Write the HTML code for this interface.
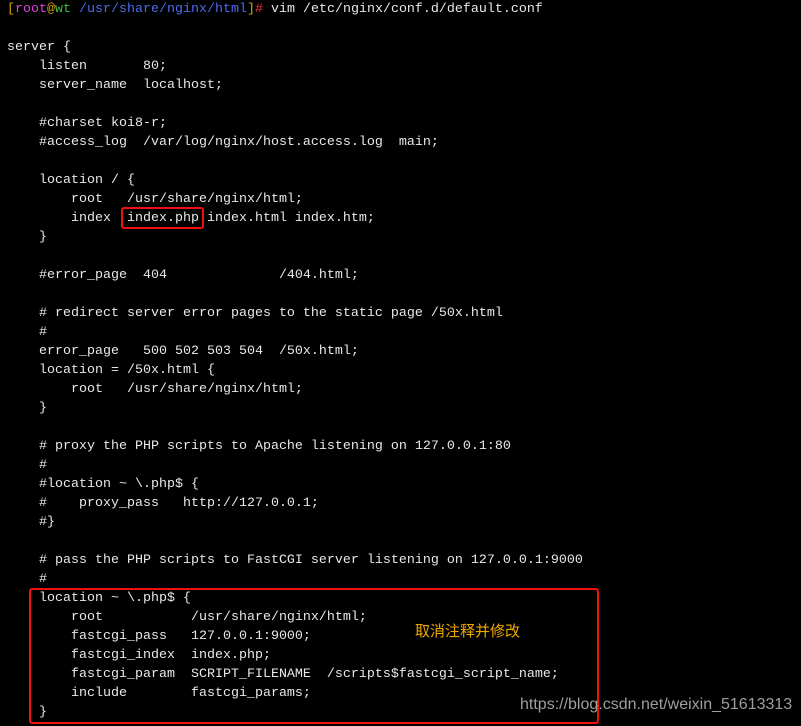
<!DOCTYPE html>
<html><head><meta charset="utf-8"><style>
html,body{margin:0;padding:0;background:#000;width:801px;height:726px;overflow:hidden}
pre{margin:0;position:absolute;left:7px;top:0px;font-family:"Liberation Mono","DejaVu Sans Mono",monospace;font-size:13.33px;line-height:19px;color:#e8e8e8}
.b{position:absolute;border:2px solid #f01010;border-radius:3px}
.y{color:#d0a000}.m{color:#e040e0}.g{color:#40c040}.bl{color:#4a6cf0}.r{color:#f03030}
.cn{position:absolute;left:415px;top:620px;color:#f0a800;font-family:"Noto Sans CJK SC",sans-serif;font-size:15px}
.wm{position:absolute;left:520px;top:696px;color:#bbb;font-family:"Liberation Sans",sans-serif;font-size:16px;opacity:.85}
</style></head><body>
<pre><span class="y">[</span><span class="m">root</span><span class="y">@</span><span class="g">wt</span> <span class="bl">/usr/share/nginx/html</span><span class="y">]</span><span class="r">#</span> vim /etc/nginx/conf.d/default.conf

server {
    listen       80;
    server_name  localhost;

    #charset koi8-r;
    #access_log  /var/log/nginx/host.access.log  main;

    location / {
        root   /usr/share/nginx/html;
        index  index.php index.html index.htm;
    }

    #error_page  404              /404.html;

    # redirect server error pages to the static page /50x.html
    #
    error_page   500 502 503 504  /50x.html;
    location = /50x.html {
        root   /usr/share/nginx/html;
    }

    # proxy the PHP scripts to Apache listening on 127.0.0.1:80
    #
    #location ~ \.php$ {
    #    proxy_pass   http://127.0.0.1;
    #}

    # pass the PHP scripts to FastCGI server listening on 127.0.0.1:9000
    #
    location ~ \.php$ {
        root           /usr/share/nginx/html;
        fastcgi_pass   127.0.0.1:9000;
        fastcgi_index  index.php;
        fastcgi_param  SCRIPT_FILENAME  /scripts$fastcgi_script_name;
        include        fastcgi_params;
    }</pre>
<div class="b" style="left:121px;top:207px;width:79px;height:18px"></div>
<div class="b" style="left:29px;top:588px;width:566px;height:132px"></div>
<div class="cn">取消注释并修改</div>
<div class="wm">https://blog.csdn.net/weixin_51613313</div>
</body></html>
